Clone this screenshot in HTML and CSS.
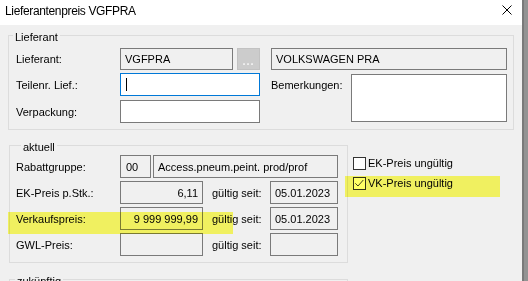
FILE: index.html
```html
<!DOCTYPE html>
<html lang="de">
<head>
    <meta charset="UTF-8">
    <meta name="viewport" content="width=device-width, initial-scale=1.0">
    <title>Lieferantenpreis VGFPRA</title>
    <link rel="stylesheet" href="styles.css">
</head>
<body>
    <div class="screen">
        <div class="window">
            <div class="titlebar">
                <span class="title">Lieferantenpreis VGFPRA</span>
                <svg class="close" width="10" height="10" viewBox="0 0 10 10">
                    <path d="M0.5 0.5 L9.5 9.5 M9.5 0.5 L0.5 9.5" stroke="#000" stroke-width="1" fill="none"/>
                </svg>
            </div>

            <div class="content">
                <!-- Lieferant -->
                <fieldset class="group supplier">
                    <legend>Lieferant</legend>
                    <div class="inner">
                        <div class="row-first">
                            <span class="lbl">Lieferant:</span>
                            <div class="box ro w-code">VGFPRA</div>
                            <div class="dots">...</div>
                            <div class="box ro w-name">VOLKSWAGEN PRA</div>
                        </div>
                        <div class="supplier-grid">
                            <span class="lbl">Teilenr. Lief.:</span>
                            <div class="box edit focus"><span class="caret"></span></div>
                            <span class="lbl lbl-notes">Bemerkungen:</span>
                            <div class="box edit notes"></div>
                            <span class="lbl">Verpackung:</span>
                            <div class="box edit"></div>
                        </div>
                    </div>
                </fieldset>

                <!-- aktuell -->
                <div class="current-wrap">
                    <fieldset class="group current">
                        <legend>aktuell</legend>
                        <div class="frow frow-first">
                            <span class="lbl">Rabattgruppe:</span>
                            <div class="box ro w-grp">00</div>
                            <div class="box ro w-grpname">Access.pneum.peint. prod/prof</div>
                        </div>
                        <div class="frow">
                            <span class="lbl">EK-Preis p.Stk.:</span>
                            <div class="box ro w-price">6,11</div>
                            <span class="since">gültig seit:</span>
                            <div class="box ro w-date">05.01.2023</div>
                        </div>
                        <div class="frow">
                            <span class="lbl">Verkaufspreis:</span>
                            <div class="box ro w-price">9 999 999,99</div>
                            <span class="since">gültig seit:</span>
                            <div class="box ro w-date">05.01.2023</div>
                        </div>
                        <div class="frow">
                            <span class="lbl">GWL-Preis:</span>
                            <div class="box ro w-price"></div>
                            <span class="since">gültig seit:</span>
                            <div class="box ro w-date"></div>
                        </div>
                    </fieldset>

                    <div class="flags">
                        <div class="flag">
                            <span class="cb"></span>
                            <span>EK-Preis ungültig</span>
                        </div>
                        <div class="flag">
                            <span class="cb">
                                <svg width="11" height="11" viewBox="0 0 11 11">
                                    <polyline points="1.3,5.3 4,8 9.3,2" stroke="#444" stroke-width="1" fill="none"/>
                                </svg>
                            </span>
                            <span>VK-Preis ungültig</span>
                        </div>
                    </div>
                </div>

                <!-- zukünftig -->
                <fieldset class="group future">
                    <legend>zukünftig</legend>
                </fieldset>
            </div>
        </div>
        <div class="edge"></div>

        <!-- highlighter marks -->
        <div class="mark mark-price"></div>
        <div class="mark mark-flag"></div>
    </div>
</body>
</html>
```

FILE: styles.css
```css
/* Basic styling */
* {
    box-sizing: border-box;
}
body {
    margin: 0;
    background: #fff;
    font-family: "Liberation Sans", Arial, sans-serif;
    font-size: 11px;
    color: #000;
}
.screen {
    position: relative;
    display: flex;
    width: 528px;
    height: 281px;
    overflow: hidden;
}
.window {
    width: 522px;
    display: flex;
    flex-direction: column;
}
.edge {
    flex: 1;
    border-left: 2px solid #7a7a7a;
    background: #939393;
}

/* title bar */
.titlebar {
    flex: 0 0 25px;
    background: #fff;
    display: flex;
    align-items: flex-start;
    justify-content: space-between;
    padding: 0 10px 0 5px;
}
.title {
    font-size: 12px;
    line-height: 23px;
    letter-spacing: -0.35px;
}
.close {
    display: block;
    margin-top: 5px;
}

.content {
    flex: 1;
    background: #f0f0f0;
}

/* group boxes */
.group {
    margin: 0;
    padding: 0;
    border: 1px solid #dcdcdc;
    min-width: 0;
}
.group legend {
    padding: 5px 2px 0;
    line-height: 13px;
}
.supplier {
    margin: 1px 8px 0 8px;
    padding: 4px 0 6px 0;
}
.supplier legend {
    margin-left: 4px;
}
.supplier .inner {
    padding-left: 7px;
}

.lbl {
    width: 104px;
    flex: none;
    display: flex;
    align-items: center;
}
.box {
    border: 1px solid #7a7a7a;
    padding: 0 4px;
    display: flex;
    align-items: center;
    white-space: nowrap;
    overflow: hidden;
}
.ro {
    background: #f0f0f0;
}
.edit {
    background: #fff;
}
.focus {
    border-color: #0078d7;
}
.caret {
    width: 1px;
    height: 13px;
    margin-left: 1px;
    background: #000;
}

.row-first {
    display: flex;
    height: 22px;
}
.w-code {
    width: 113px;
}
.dots {
    width: 23px;
    margin-left: 4px;
    background: #cccccc;
    border: 1px solid #c2c2c2;
    color: #f6f6f6;
    font-weight: bold;
    letter-spacing: 1px;
    display: flex;
    align-items: flex-end;
    justify-content: center;
    line-height: 11px;
    padding-bottom: 2px;
}
.w-name {
    width: 236px;
    margin-left: 11px;
}

.supplier-grid {
    display: grid;
    grid-template-columns: 104px 140px 91px 156px;
    grid-template-rows: 23px 23px;
    row-gap: 4px;
    margin-top: 3px;
}
.lbl-notes {
    padding-left: 11px;
}
.notes {
    grid-row: span 2;
    margin-top: 1px;
    height: 48px;
}

/* aktuell */
.current-wrap {
    display: flex;
    align-items: flex-start;
    margin-top: 6px;
}
.current {
    margin-left: 9px;
    width: 339px;
    padding: 1px 9px 6px 6px;
}
.current legend {
    margin-left: 5px;
}
.frow {
    display: flex;
    height: 23px;
    margin-top: 3px;
}
.frow-first {
    margin-top: 0;
    margin-bottom: 2px;
}
.w-grp {
    width: 31px;
    padding-left: 5px;
}
.w-grpname {
    width: 185px;
    margin-left: 2px;
}
.w-price {
    width: 83px;
    justify-content: flex-end;
}
.since {
    width: 67px;
    padding-left: 9px;
    display: flex;
    align-items: center;
}
.w-date {
    width: 68px;
}

.flags {
    margin-left: 5px;
    padding-top: 21px;
    display: flex;
    flex-direction: column;
    gap: 7px;
}
.flag {
    display: flex;
    align-items: center;
    height: 13px;
    line-height: 13px;
}
.cb {
    width: 13px;
    height: 13px;
    margin-right: 2px;
    border: 1px solid #333;
    background: #fff;
}
.cb svg {
    display: block;
}

/* zukünftig */
.future {
    margin: 7px 0 0 9px;
    width: 339px;
    height: 40px;
}
.future legend {
    margin-left: 5px;
}

/* highlighter */
.mark {
    position: absolute;
    background: rgb(255, 255, 102);
    mix-blend-mode: multiply;
}
.mark-price {
    left: 8px;
    top: 212px;
    width: 225px;
    height: 22px;
}
.mark-flag {
    left: 345px;
    top: 176px;
    width: 155px;
    height: 21px;
}
```
